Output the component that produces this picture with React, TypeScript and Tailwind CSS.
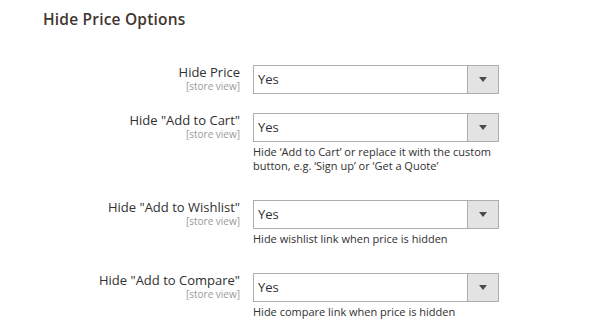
import React from 'react';

interface FieldProps {
    label: string;
    note?: React.ReactNode;
}

const FIELDS: FieldProps[] = [
    { label: 'Hide Price' },
    { label: 'Hide "Add to Cart"', note: <>Hide ‘Add to Cart’ or replace it with the custom<br />button, e.g. ‘Sign up’ or ‘Get a Quote’</> },
    { label: 'Hide "Add to Wishlist"', note: 'Hide wishlist link when price is hidden' },
    { label: 'Hide "Add to Compare"', note: 'Hide compare link when price is hidden' },
];

function Field({ label, note }: FieldProps) {
    return (
        <div className="grid grid-cols-[240px_246px] gap-x-[13px]">
            <div className="text-right">
                <div className="text-[13px] leading-[15px] font-medium text-[#303030]">{label}</div>
                <div className="text-[10px] leading-[12px] text-[#999999]">[store view]</div>
            </div>
            <div>
                <div className="flex h-[29px] border border-[#adadad] bg-white">
                    <div className="flex-1 pl-[4px] text-[13px] leading-[27px] text-[#303030]">Yes</div>
                    <div className="w-[31px] flex items-center justify-center bg-[#e3e3e3] border-l border-[#adadad]">
                        <svg width="8" height="5" viewBox="0 0 8 5"><path d="M0 0h8L4 5z" fill="#514943" /></svg>
                    </div>
                </div>
                {note && (
                    <div className="mt-[3px] mb-[8px] text-[11px] leading-[14px] text-[#303030]">{note}</div>
                )}
            </div>
        </div>
    );
}

export default function App() {
    return (
        <div className="w-[597px] h-[336px] bg-white overflow-hidden" style={{ fontFamily: '"Open Sans", sans-serif' }}>
            <h2 className="pl-[43px] pt-[9px] text-[15.5px] leading-[20px] font-semibold text-[#41362f] tracking-[0.2px]">Hide Price Options</h2>
            <div className="mt-[36px] flex flex-col gap-[19px]">
                {FIELDS.map(f => <Field key={f.label} {...f} />)}
            </div>
        </div>
    );
}
